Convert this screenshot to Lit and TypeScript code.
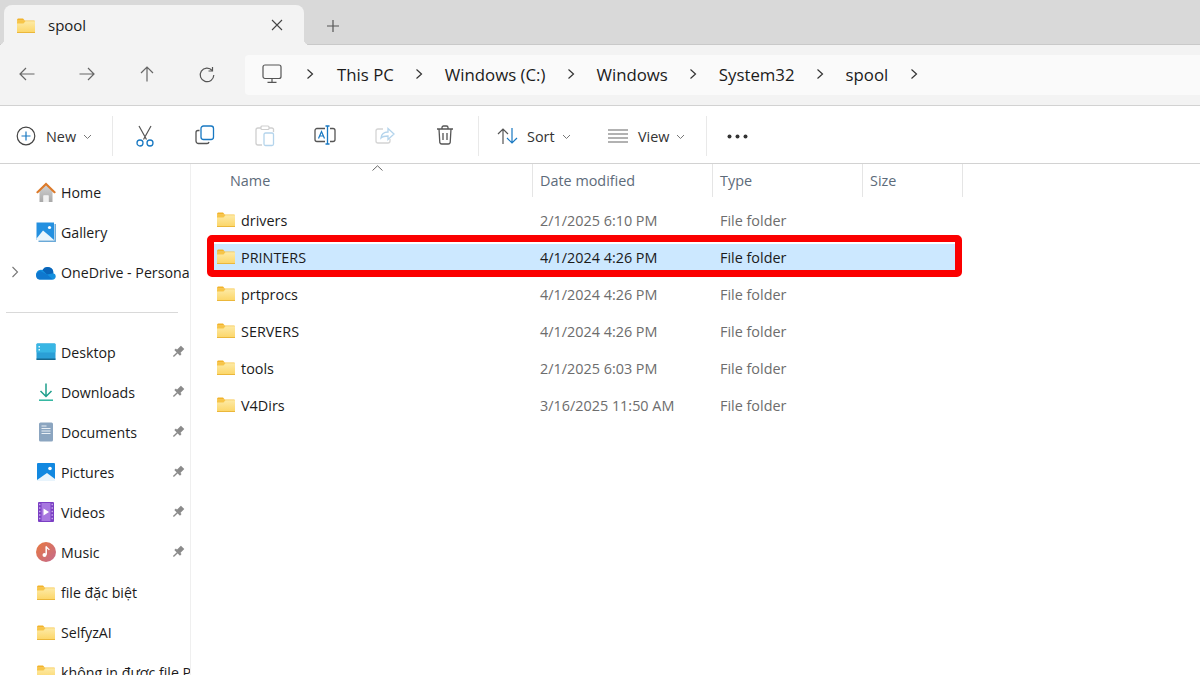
import { LitElement, html, css } from 'lit';
import { customElement } from 'lit/decorators.js';

const folder = html`<svg class="folder" width="20" height="17" viewBox="0 0 20 17">
  <defs><linearGradient id="fg" x1="0" y1="0" x2="0" y2="1"><stop offset="0" stop-color="#fdeaa6"/><stop offset="1" stop-color="#fcd565"/></linearGradient></defs>
  <path d="M1 3.200C1 2.200 1.700 1.500 2.600 1.500H7l2 2.200H1z" fill="#f2b32a"/>
  <rect x="1" y="3.500" width="18" height="12.500" rx="1" fill="#f7c548"/>
  <path d="M1 6.500 7.500 6.500 9.500 4.200H19V15a1 1 0 0 1-1 1H2a1 1 0 0 1-1-1z" fill="url(#fg)"/>
  <rect x="1" y="15.200" width="18" height="0.800" fill="#e6b030"/>
</svg>`;

const chevron = html`<svg class="crumb-sep" width="10" height="12" viewBox="0 0 10 12"><path d="M2.500 1.500 7.500 6l-5 4.500" fill="none" stroke="#333" stroke-width="1.200"/></svg>`;

const caret = html`<svg class="caret" width="9" height="6" viewBox="0 0 9 6"><path d="M1 1l3.500 3.500L8 1" fill="none" stroke="#777" stroke-width="1"/></svg>`;

const pin = html`<svg width="14" height="14" viewBox="0 0 14 14"><g transform="rotate(45 7 7)" fill="#8a8a8a"><rect x="4.600" y="0.500" width="4.800" height="6"/><rect x="3" y="6" width="8" height="2.200"/><rect x="6.300" y="8" width="1.400" height="5.500"/></g></svg>`;

const icons: Record<string, unknown> = {
  home: html`<svg width="20" height="20" viewBox="0 0 20 20"><defs><linearGradient id="hb" x1="0" y1="0" x2="0" y2="1"><stop offset="0" stop-color="#d2d2d2"/><stop offset="1" stop-color="#a8a8a8"/></linearGradient></defs><path d="M3.500 9 10 3l6.500 6v11H12.500v-6.500h-5V20H3.500z" fill="url(#hb)"/><path d="M7.500 13.500h5V20h-5z" fill="#f1f1f1"/><path d="M0 10.200 10 .5l10 9.700-1.700 1.300L10 3.500 1.700 11.500z" fill="#dc7a2a"/></svg>`,
  gallery: html`<svg width="20" height="20" viewBox="0 0 20 20"><rect x="0.500" y="0.500" width="17.500" height="17.500" fill="#2490e0"/><path d="M.5 16.500 7 8.500 13 13.500 18 18H.5z" fill="#eaf5fc"/><circle cx="13.500" cy="5.500" r="1.600" fill="#fff"/><path d="M19.200 2V19.200H2.500" fill="none" stroke="#6aa9d8" stroke-width="1.500"/></svg>`,
  onedrive: html`<svg width="20" height="15" viewBox="0 0 20 15"><path d="M3.500 14.500h13a3.200 3.200 0 0 0 .8-6.300A5.800 5.800 0 0 0 6.500 5 4.800 4.800 0 0 0 3.500 14.500z" fill="#1490df"/><path d="M6.500 5a5.800 5.800 0 0 1 10.800 3.200L11 9.500z" fill="#0a64b8"/><path d="M.3 10.800A4.400 4.400 0 0 1 4.500 6L11 9.500 17 14.500H3.500a3.500 3.500 0 0 1-3.200-3.700z" fill="#0f78cf"/></svg>`,
  desktop: html`<svg width="20" height="18" viewBox="0 0 20 18"><rect x="0.500" y="0.500" width="19" height="16.500" rx="1" fill="#2b9fd6"/><rect x="0.500" y="0.500" width="19" height="9" rx="1" fill="#38b6e4"/><rect x="0.500" y="15.500" width="19" height="1.500" fill="#17688f"/><rect x="2.500" y="3" width="1.500" height="1.500" fill="#dff4fb"/><rect x="2.500" y="6" width="1.500" height="1.500" fill="#dff4fb"/></svg>`,
  downloads: html`<svg width="20" height="20" viewBox="0 0 20 20"><path d="M10 1.500V14M4.500 9l5.500 5.500L15.500 9" fill="none" stroke="#1f9f8c" stroke-width="1.500"/><path d="M3 18.200h14" stroke="#2cb59e" stroke-width="1.500"/></svg>`,
  documents: html`<svg width="16" height="20" viewBox="0 0 16 20"><rect x="1" y="0.500" width="14" height="19" rx="1.500" fill="#8ba5c0"/><path d="M3.500 4h5M3.500 6.500h9M3.500 9h9M3.500 11.500h9" stroke="#e9eff5" stroke-width="1"/></svg>`,
  pictures: html`<svg width="18" height="18" viewBox="0 0 18 18"><rect width="18" height="18" rx="1" fill="#1288e0"/><path d="M0 17 10 10 18 16V18H0z" fill="#e8f4fc"/><circle cx="13" cy="5.500" r="1.800" fill="#fff"/></svg>`,
  videos: html`<svg width="16" height="20" viewBox="0 0 16 20"><rect width="16" height="20" rx="1" fill="#7b3fc4"/><rect x="3.500" y="1" width="9" height="18" fill="#a878e0"/><path d="M5.500 6.500 11 10 5.500 13.500z" fill="#fff"/><path d="M1.200 2.500h1.200M1.200 6h1.200M1.200 9.500h1.200M1.200 13h1.200M1.200 16.500h1.200M13.600 2.500h1.200M13.600 6h1.200M13.600 9.500h1.200M13.600 13h1.200M13.600 16.500h1.200" stroke="#d9c4f4" stroke-width="1.300"/></svg>`,
  music: html`<svg width="20" height="20" viewBox="0 0 20 20"><defs><linearGradient id="m" x1="0" y1="0" x2="1" y2="1"><stop offset="0" stop-color="#e8793f"/><stop offset="1" stop-color="#c4698e"/></linearGradient></defs><circle cx="10" cy="10" r="10" fill="url(#m)"/><path d="M10.200 4.500v8.200" stroke="#fff" stroke-width="1.500"/><circle cx="8.500" cy="13" r="2" fill="#fff"/><path d="M10.200 4.500c.5 2 2.500 2 3 3.500" fill="none" stroke="#fff" stroke-width="1.300"/></svg>`,
};

const navItems = [
  { icon: 'desktop', label: 'Desktop', pinned: true },
  { icon: 'downloads', label: 'Downloads', pinned: true },
  { icon: 'documents', label: 'Documents', pinned: true },
  { icon: 'pictures', label: 'Pictures', pinned: true },
  { icon: 'videos', label: 'Videos', pinned: true },
  { icon: 'music', label: 'Music', pinned: true },
  { icon: 'folder', label: 'file đặc biệt', pinned: false },
  { icon: 'folder', label: 'SelfyzAI', pinned: false },
  { icon: 'folder', label: 'không in được file PDF', pinned: false },
];

const files = [
  { name: 'drivers', date: '2/1/2025 6:10 PM' },
  { name: 'PRINTERS', date: '4/1/2024 4:26 PM', selected: true },
  { name: 'prtprocs', date: '4/1/2024 4:26 PM' },
  { name: 'SERVERS', date: '4/1/2024 4:26 PM' },
  { name: 'tools', date: '2/1/2025 6:03 PM' },
  { name: 'V4Dirs', date: '3/16/2025 11:50 AM' },
];

const crumbs = ['This PC', 'Windows (C:)', 'Windows', 'System32', 'spool'];

@customElement('app-root')
export class AppRoot extends LitElement {
  static styles = css`
    :host {
      display: flex;
      flex-direction: column;
      width: 1200px;
      height: 675px;
      overflow: hidden;
      background: #fff;
      color: #1b1b1b;
      font-family: "Open Sans", "Noto Sans", sans-serif;
      font-size: 14.4px;
    }
    svg { display: block; flex: none; }

    .tabs {
      height: 45px;
      box-sizing: border-box;
      flex: none;
      display: flex;
      align-items: flex-end;
      padding-left: 4px;
      background: #d9d9d9;
      border-bottom: 1px solid #c9c9c9;
    }
    .tab {
      position: relative;
      width: 300px;
      height: 40px;
      margin-bottom: -1px;
      box-sizing: border-box;
      display: flex;
      align-items: center;
      padding: 0 21px 0 12px;
      background: #f3f3f3;
      border-radius: 8px 8px 0 0;
    }
    .tab::before, .tab::after {
      content: "";
      position: absolute;
      bottom: 0;
      width: 6px;
      height: 6px;
    }
    .tab::before {
      left: -6px;
      background: radial-gradient(circle at 0 0, transparent 6px, #f3f3f3 6.5px);
    }
    .tab::after {
      right: -6px;
      background: radial-gradient(circle at 100% 0, transparent 6px, #f3f3f3 6.5px);
    }
    .tab .title { margin-left: 12px; flex: 1; font-size: 15px; }
    .add { margin-left: 22px; margin-top: 8px; align-self: center; }

    .nav {
      height: 61px;
      box-sizing: border-box;
      flex: none;
      display: flex;
      align-items: center;
      background: #f3f3f3;
      border-bottom: 1px solid #d2d2d2;
    }
    .nav-btn { width: 60px; display: flex; justify-content: center; }
    .nav-btns { display: flex; margin-left: -3px; width: 248px; }
    .address {
      flex: 1;
      height: 40px;
      box-sizing: border-box;
      display: flex;
      align-items: center;
      padding: 0 0 2px 17px;
      background: #fafafa;
      border-radius: 4px 0 0 4px;
      font-size: 16.8px;
    }
    .crumb-sep { margin: 0 20.5px; }
    .pc + .crumb-sep { margin: 0 22px 0 23px; }

    .toolbar {
      height: 58px;
      box-sizing: border-box;
      flex: none;
      display: flex;
      align-items: center;
      padding-top: 3px;
      border-bottom: 1px solid #d2d2d2;
      color: #333;
    }
    .sep { width: 1px; height: 40px; background: #e9e9e9; flex: none; }
    .menu { display: flex; align-items: center; }
    .menu .caret { margin-left: 7px; margin-top: 1px; }
    .menu span { margin-left: 10px; }
    .new { width: 112px; padding-left: 16px; box-sizing: border-box; }
    .tool { width: 60px; display: flex; justify-content: center; }
    .tools { display: flex; margin: 0 3px 0 2px; }
    .sort { margin-left: 18px; width: 111px; }
    .sort span { margin-left: 9px; }
    .view { width: 98px; }
    .more { margin-left: 20px; }

    .main { flex: 1; min-height: 0; display: flex; }
    .side {
      width: 191px;
      box-sizing: border-box;
      flex: none;
      border-right: 1px solid #efefef;
      padding-top: 8px;
      overflow: hidden;
      font-size: 14.2px;
    }
    .item {
      height: 40px;
      display: flex;
      align-items: center;
      position: relative;
      white-space: nowrap;
    }
    .exp { width: 36px; flex: none; display: flex; justify-content: center; padding-right: 7px; box-sizing: border-box; }
    .ico { width: 20px; flex: none; display: flex; justify-content: center; }
    .label { margin-left: 5px; flex: none; }
    .pin { position: absolute; left: 171px; top: 13px; }
    .divider { height: 1px; background: #d9d9d9; margin: 20px 12px 19px 6px; }

    .list { flex: 1; min-width: 0; position: relative; }
    .cols {
      display: grid;
      grid-template-columns: 342px 180px 150px 100px;
      width: 772px;
    }
    .head { height: 33px; color: #5d6b7a; }
    .head div {
      border-right: 1px solid #e5e5e5;
      padding-left: 7px;
      line-height: 33px;
    }
    .head div:first-child { padding-left: 39px; }
    .sort-arrow { position: absolute; left: 181px; top: 1px; }
    .rows { margin-top: 5px; }
    .row { height: 37px; align-items: center; color: #6d6d6d; }
    .row div { padding-left: 7px; display: flex; align-items: center; }
    .row .name { color: #1b1b1b; padding-left: 25px; gap: 5px; }
    .row .folder { margin-top: -2px; }
    .row.selected { color: #1b1b1b; }
    .row.selected::before {
      content: "";
      position: absolute;
      left: 22px;
      right: 242px;
      height: 28px;
      background: #cce8ff;
    }
    .row > * { position: relative; }
    .frame {
      position: absolute;
      left: 16px;
      top: 71px;
      width: 755px;
      height: 42px;
      box-sizing: border-box;
      border: 7px solid #fb0000;
      border-radius: 5px;
    }
  `;

  render() {
    return html`
      <div class="tabs">
        <div class="tab">
          ${folder}
          <span class="title">spool</span>
          <svg width="12" height="12" viewBox="0 0 12 12"><path d="M1 1l10 10M11 1 1 11" stroke="#444" stroke-width="1.100"/></svg>
        </div>
        <svg class="add" width="14" height="14" viewBox="0 0 14 14"><path d="M7 1v12M1 7h12" stroke="#555" stroke-width="1.200"/></svg>
      </div>
      <div class="nav">
        <div class="nav-btns">
          <div class="nav-btn"><svg width="16" height="16" viewBox="0 0 16 16"><path d="M15.500 8H1M7 2 1 8l6 6" fill="none" stroke="#666" stroke-width="1.200"/></svg></div>
          <div class="nav-btn"><svg width="16" height="16" viewBox="0 0 16 16"><path d="M.5 8H15M9 2l6 6-6 6" fill="none" stroke="#666" stroke-width="1.200"/></svg></div>
          <div class="nav-btn"><svg width="16" height="16" viewBox="0 0 16 16"><path d="M8 15.500V1M2 7l6-6 6 6" fill="none" stroke="#666" stroke-width="1.200"/></svg></div>
          <div class="nav-btn"><svg width="18" height="18" viewBox="0 0 18 18"><path d="M14.200 4.500A6.800 6.800 0 1 0 15.800 9" fill="none" stroke="#555" stroke-width="1.200"/><path d="M14.500 1v4h-4" fill="none" stroke="#555" stroke-width="1.200"/></svg></div>
        </div>
        <div class="address">
          <svg class="pc" width="20" height="20" viewBox="0 0 20 20"><rect x="1" y="1" width="18" height="13.500" rx="2" fill="none" stroke="#555" stroke-width="1.200"/><path d="M10 14.500V18M5.500 18.300h9" stroke="#555" stroke-width="1.200"/></svg>
          ${crumbs.map((c) => html`${chevron}<span>${c}</span>`)}
          ${chevron}
        </div>
      </div>
      <div class="toolbar">
        <div class="menu new">
          <svg width="20" height="20" viewBox="0 0 20 20"><circle cx="10" cy="10" r="8.800" fill="none" stroke="#444" stroke-width="1.200"/><path d="M10 5.500v9M5.500 10h9" stroke="#1878c2" stroke-width="1.200"/></svg>
          <span>New</span>${caret}
        </div>
        <div class="sep"></div>
        <div class="tools">
          <div class="tool"><svg width="20" height="22" viewBox="0 0 20 22"><path d="M4 1l7.500 13.500M16 1 8.500 14.500" fill="none" stroke="#555" stroke-width="1.200"/><circle cx="5" cy="18" r="3" fill="none" stroke="#1878c2" stroke-width="1.300"/><circle cx="15" cy="18" r="3" fill="none" stroke="#1878c2" stroke-width="1.300"/></svg></div>
          <div class="tool"><svg width="20" height="20" viewBox="0 0 20 20"><path d="M4.500 5.500H3A2 2 0 0 0 1 7.500V16a2.500 2.500 0 0 0 2.500 2.500H12a2 2 0 0 0 2-1.500" fill="none" stroke="#555" stroke-width="1.300"/><rect x="6" y="1" width="12.500" height="13.500" rx="2.500" fill="none" stroke="#1878c2" stroke-width="1.300"/></svg></div>
          <div class="tool"><svg width="20" height="22" viewBox="0 0 20 22"><path d="M6 3H3a2 2 0 0 0-2 2v13a2 2 0 0 0 2 2h4M14 3h3a2 2 0 0 1 1.500 1v3" fill="none" stroke="#cfcfcf" stroke-width="1.300"/><rect x="6" y="1" width="8" height="3.500" rx="1" fill="none" stroke="#cfcfcf" stroke-width="1.200"/><rect x="9" y="8" width="9.500" height="12.500" rx="1.500" fill="none" stroke="#b4d4ec" stroke-width="1.300"/></svg></div>
          <div class="tool"><svg width="22" height="20" viewBox="0 0 22 20"><path d="M11 3.500H3A2 2 0 0 0 1 5.500v9a2 2 0 0 0 2 2h8M16 3.500h3a2 2 0 0 1 2 2v9a2 2 0 0 1-2 2h-3" fill="none" stroke="#555" stroke-width="1.300"/><path d="M13.500 1v18M11.500 1h4M11.500 19h4" stroke="#1878c2" stroke-width="1.300"/><path d="M4.500 13.500 7.500 6.500 10.500 13.500M5.500 11h4" fill="none" stroke="#1878c2" stroke-width="1.200"/></svg></div>
          <div class="tool"><svg width="20" height="20" viewBox="0 0 20 20"><path d="M8 4H3a2 2 0 0 0-2 2v10a2 2 0 0 0 2 2h10a2 2 0 0 0 2-2v-2" fill="none" stroke="#d4d4d4" stroke-width="1.300"/><path d="M6 13c.5-4 3.500-6 7-6V3.500l6 5.500-6 5.500V11c-3 0-5.500.5-7 2z" fill="none" stroke="#b4d4ec" stroke-width="1.300"/></svg></div>
          <div class="tool"><svg width="18" height="20" viewBox="0 0 18 20"><path d="M1 4h16M6 4V2.500A1.500 1.500 0 0 1 7.500 1h3A1.500 1.500 0 0 1 12 2.500V4M3 4l.8 13.500A2 2 0 0 0 5.800 19h6.400a2 2 0 0 0 2-1.500L15 4M7 8v7M11 8v7" fill="none" stroke="#555" stroke-width="1.300"/></svg></div>
        </div>
        <div class="sep"></div>
        <div class="menu sort">
          <svg width="21" height="18" viewBox="0 0 21 18"><path d="M6 17V2M1 7l5-5 5 5" fill="none" stroke="#555" stroke-width="1.200"/><path d="M15 1v15M10 11l5 5 5-5" fill="none" stroke="#1878c2" stroke-width="1.200"/></svg>
          <span>Sort</span>${caret}
        </div>
        <div class="menu view">
          <svg width="20" height="14" viewBox="0 0 20 14"><path d="M0 1h20M0 5h20M0 9h20M0 13h20" stroke="#666" stroke-width="1.200"/></svg>
          <span>View</span>${caret}
        </div>
        <div class="sep"></div>
        <svg class="more" width="21" height="5" viewBox="0 0 21 5"><circle cx="2.500" cy="2.500" r="2" fill="#333"/><circle cx="10.500" cy="2.500" r="2" fill="#333"/><circle cx="18.500" cy="2.500" r="2" fill="#333"/></svg>
      </div>
      <div class="main">
        <div class="side">
          ${this.navRow('home', 'Home')}
          ${this.navRow('gallery', 'Gallery')}
          <div class="item">
            <div class="exp"><svg width="8" height="12" viewBox="0 0 8 12"><path d="M1.500 1 6.500 6l-5 5" fill="none" stroke="#777" stroke-width="1.100"/></svg></div>
            <div class="ico">${icons.onedrive}</div>
            <span class="label">OneDrive - Personal</span>
          </div>
          <div class="divider"></div>
          ${navItems.map((n) => this.navRow(n.icon, n.label, n.pinned))}
        </div>
        <div class="list">
          <svg class="sort-arrow" width="11" height="6" viewBox="0 0 11 6"><path d="M.5 5.500 5.500.8l5 4.700" fill="none" stroke="#666" stroke-width="1"/></svg>
          <div class="cols head">
            <div>Name</div><div>Date modified</div><div>Type</div><div>Size</div>
          </div>
          <div class="rows">
            ${files.map((f) => html`
              <div class="cols row ${f.selected ? 'selected' : ''}">
                <div class="name">${folder}<span>${f.name}</span></div>
                <div>${f.date}</div>
                <div>File folder</div>
                <div></div>
              </div>
            `)}
          </div>
          <div class="frame"></div>
        </div>
      </div>
    `;
  }

  navRow(icon: string, label: string, pinned = false) {
    return html`
      <div class="item">
        <div class="exp"></div>
        <div class="ico">${icon === 'folder' ? folder : icons[icon]}</div>
        <span class="label">${label}</span>
        ${pinned ? html`<div class="pin">${pin}</div>` : ''}
      </div>
    `;
  }
}
